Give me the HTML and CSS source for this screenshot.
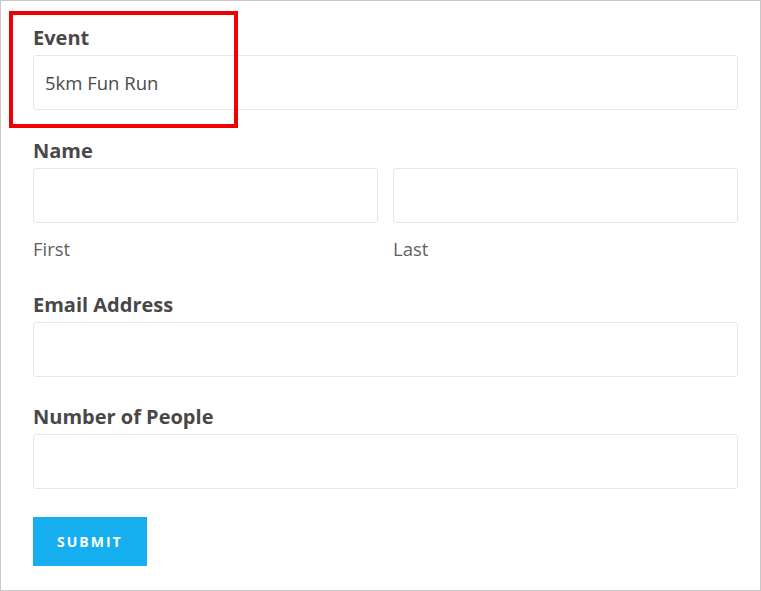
FILE: index.html
```html
<!DOCTYPE html>
<html lang="en">
<head>
    <meta charset="UTF-8">
    <meta name="viewport" content="width=device-width, initial-scale=1.0">
    <title>Event Registration</title>
    <link rel="stylesheet" href="styles.css">
</head>
<body>

<div class="frame">
    <form class="form">
        <div class="field">
            <label class="label">Event</label>
            <div class="input filled">5km Fun Run</div>
        </div>

        <div class="field name-field">
            <label class="label">Name</label>
            <div class="name-row">
                <div class="name-part">
                    <input type="text" class="input">
                    <span class="sub">First</span>
                </div>
                <div class="name-part">
                    <input type="text" class="input">
                    <span class="sub">Last</span>
                </div>
            </div>
        </div>

        <div class="field">
            <label class="label">Email Address</label>
            <input type="email" class="input">
        </div>

        <div class="field">
            <label class="label">Number of People</label>
            <input type="text" class="input">
        </div>

        <button type="submit" class="submit">Submit</button>
    </form>

    <!-- highlight around the event field -->
    <div class="highlight"></div>
</div>

</body>
</html>
```

FILE: styles.css
```css
* {
    box-sizing: border-box;
}

body {
    margin: 0;
    font-family: 'Open Sans', sans-serif;
    color: #444;
    background: #fff;
}

.frame {
    position: relative;
    width: 761px;
    height: 591px;
    border: 1px solid #c8c8c8;
    padding: 25px 22px 0 32px;
}

.field {
    margin-bottom: 28px;
}

.field:first-child {
    margin-bottom: 29px;
}

.name-field {
    margin-bottom: 32px;
}

.label {
    display: block;
    font-size: 20px;
    font-weight: bold;
    line-height: 24px;
    margin-bottom: 5px;
    color: #484848;
}

.input {
    display: block;
    width: 100%;
    height: 55px;
    border: 1px solid #e6e6e6;
    border-radius: 3px;
    background: #fff;
    padding: 0 11px;
    font-family: 'Open Sans', sans-serif;
    font-size: 18.5px;
    color: #4a4a4a;
    outline: none;
}

.filled {
    display: flex;
    align-items: center;
}

.name-row {
    display: flex;
    gap: 15px;
}

.name-part {
    flex: 1;
}

.sub {
    display: block;
    margin-top: 14px;
    font-size: 18.5px;
    line-height: 24px;
    color: #606060;
}

.submit {
    display: block;
    margin-top: 28px;
    height: 49px;
    padding: 0 24px;
    border: none;
    background: #15aff0;
    color: #fff;
    font-family: 'Open Sans', sans-serif;
    font-size: 14px;
    font-weight: bold;
    letter-spacing: 2px;
    text-transform: uppercase;
    cursor: pointer;
}

.highlight {
    position: absolute;
    left: 8px;
    top: 10px;
    width: 229px;
    height: 117px;
    border: 4px solid #f00000;
}
```
